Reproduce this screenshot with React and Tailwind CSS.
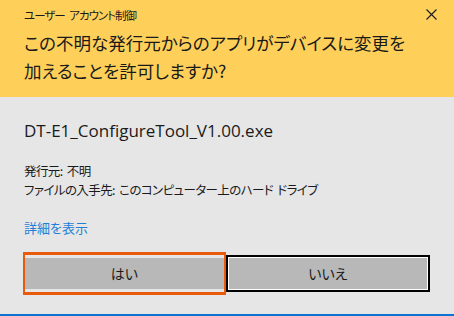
const JP = { fontFamily: '"Segoe UI", "Noto Sans CJK JP", "Noto Sans", sans-serif' }

function CloseIcon() {
  return (
    <svg width="11" height="11" viewBox="0 0 11 11" aria-hidden="true">
      <path d="M0.5 0.5L10.5 10.5M10.5 0.5L0.5 10.5" stroke="#1a1a1a" strokeWidth="1.1" fill="none" />
    </svg>
  )
}

export default function App() {
  return (
    <div className="flex h-[316px] w-[454px] flex-col overflow-hidden bg-[#e6e6e6] text-[#1a1a1a] [font-feature-settings:'palt']" style={JP}>
      {/* ヘッダー */}
      <header className="h-[97px] shrink-0 bg-[#fed05a] pl-6 pr-[17px]">
        <div className="flex h-[29px] items-center justify-between">
          <span className="text-[11.5px] leading-[16px] tracking-[-1px] [word-spacing:3px]">ユーザー アカウント制御</span>
          <CloseIcon />
        </div>
        <h1 className="whitespace-nowrap text-[17.5px] leading-[28px]">
          この不明な発行元からのアプリがデバイスに変更を<br />加えることを許可しますか?
        </h1>
      </header>

      <main className="flex flex-1 flex-col px-6 pt-[22px]">
        <p className="text-[17px] leading-[24px]" style={{ fontFamily: '"Open Sans", "Noto Sans", sans-serif' }}>
          DT-E1_ConfigureTool_V1.00.exe
        </p>
        <div className="mt-[18px] text-[12.5px] leading-[19px] tracking-[-0.6px] [word-spacing:2px]">
          <p>発行元: 不明</p>
          <p>ファイルの入手先: このコンピューター上のハード ドライブ</p>
        </div>
        <a href="#" className="mt-[19px] self-start text-[13px] leading-[19px] text-[#1f7fd6]">詳細を表示</a>

        <div className="-ml-px mt-[15px] flex items-center">
          <button type="button" className="h-[43px] w-[204px] border-x-2 border-y-[3px] border-[#ea5a0c] py-[3px]">
            <span className="flex h-full w-full items-center justify-center bg-[#b8b8b8] text-[14px]">はい</span>
          </button>
          <button type="button" className="h-[37px] w-[206px] border-2 border-black">
            <span className="flex h-full w-full items-center justify-center border border-white bg-[#b8b8b8] text-[14px]">いいえ</span>
          </button>
        </div>
      </main>

      <div className="h-[2px] shrink-0 bg-[#0a74d0]" />
    </div>
  )
}
